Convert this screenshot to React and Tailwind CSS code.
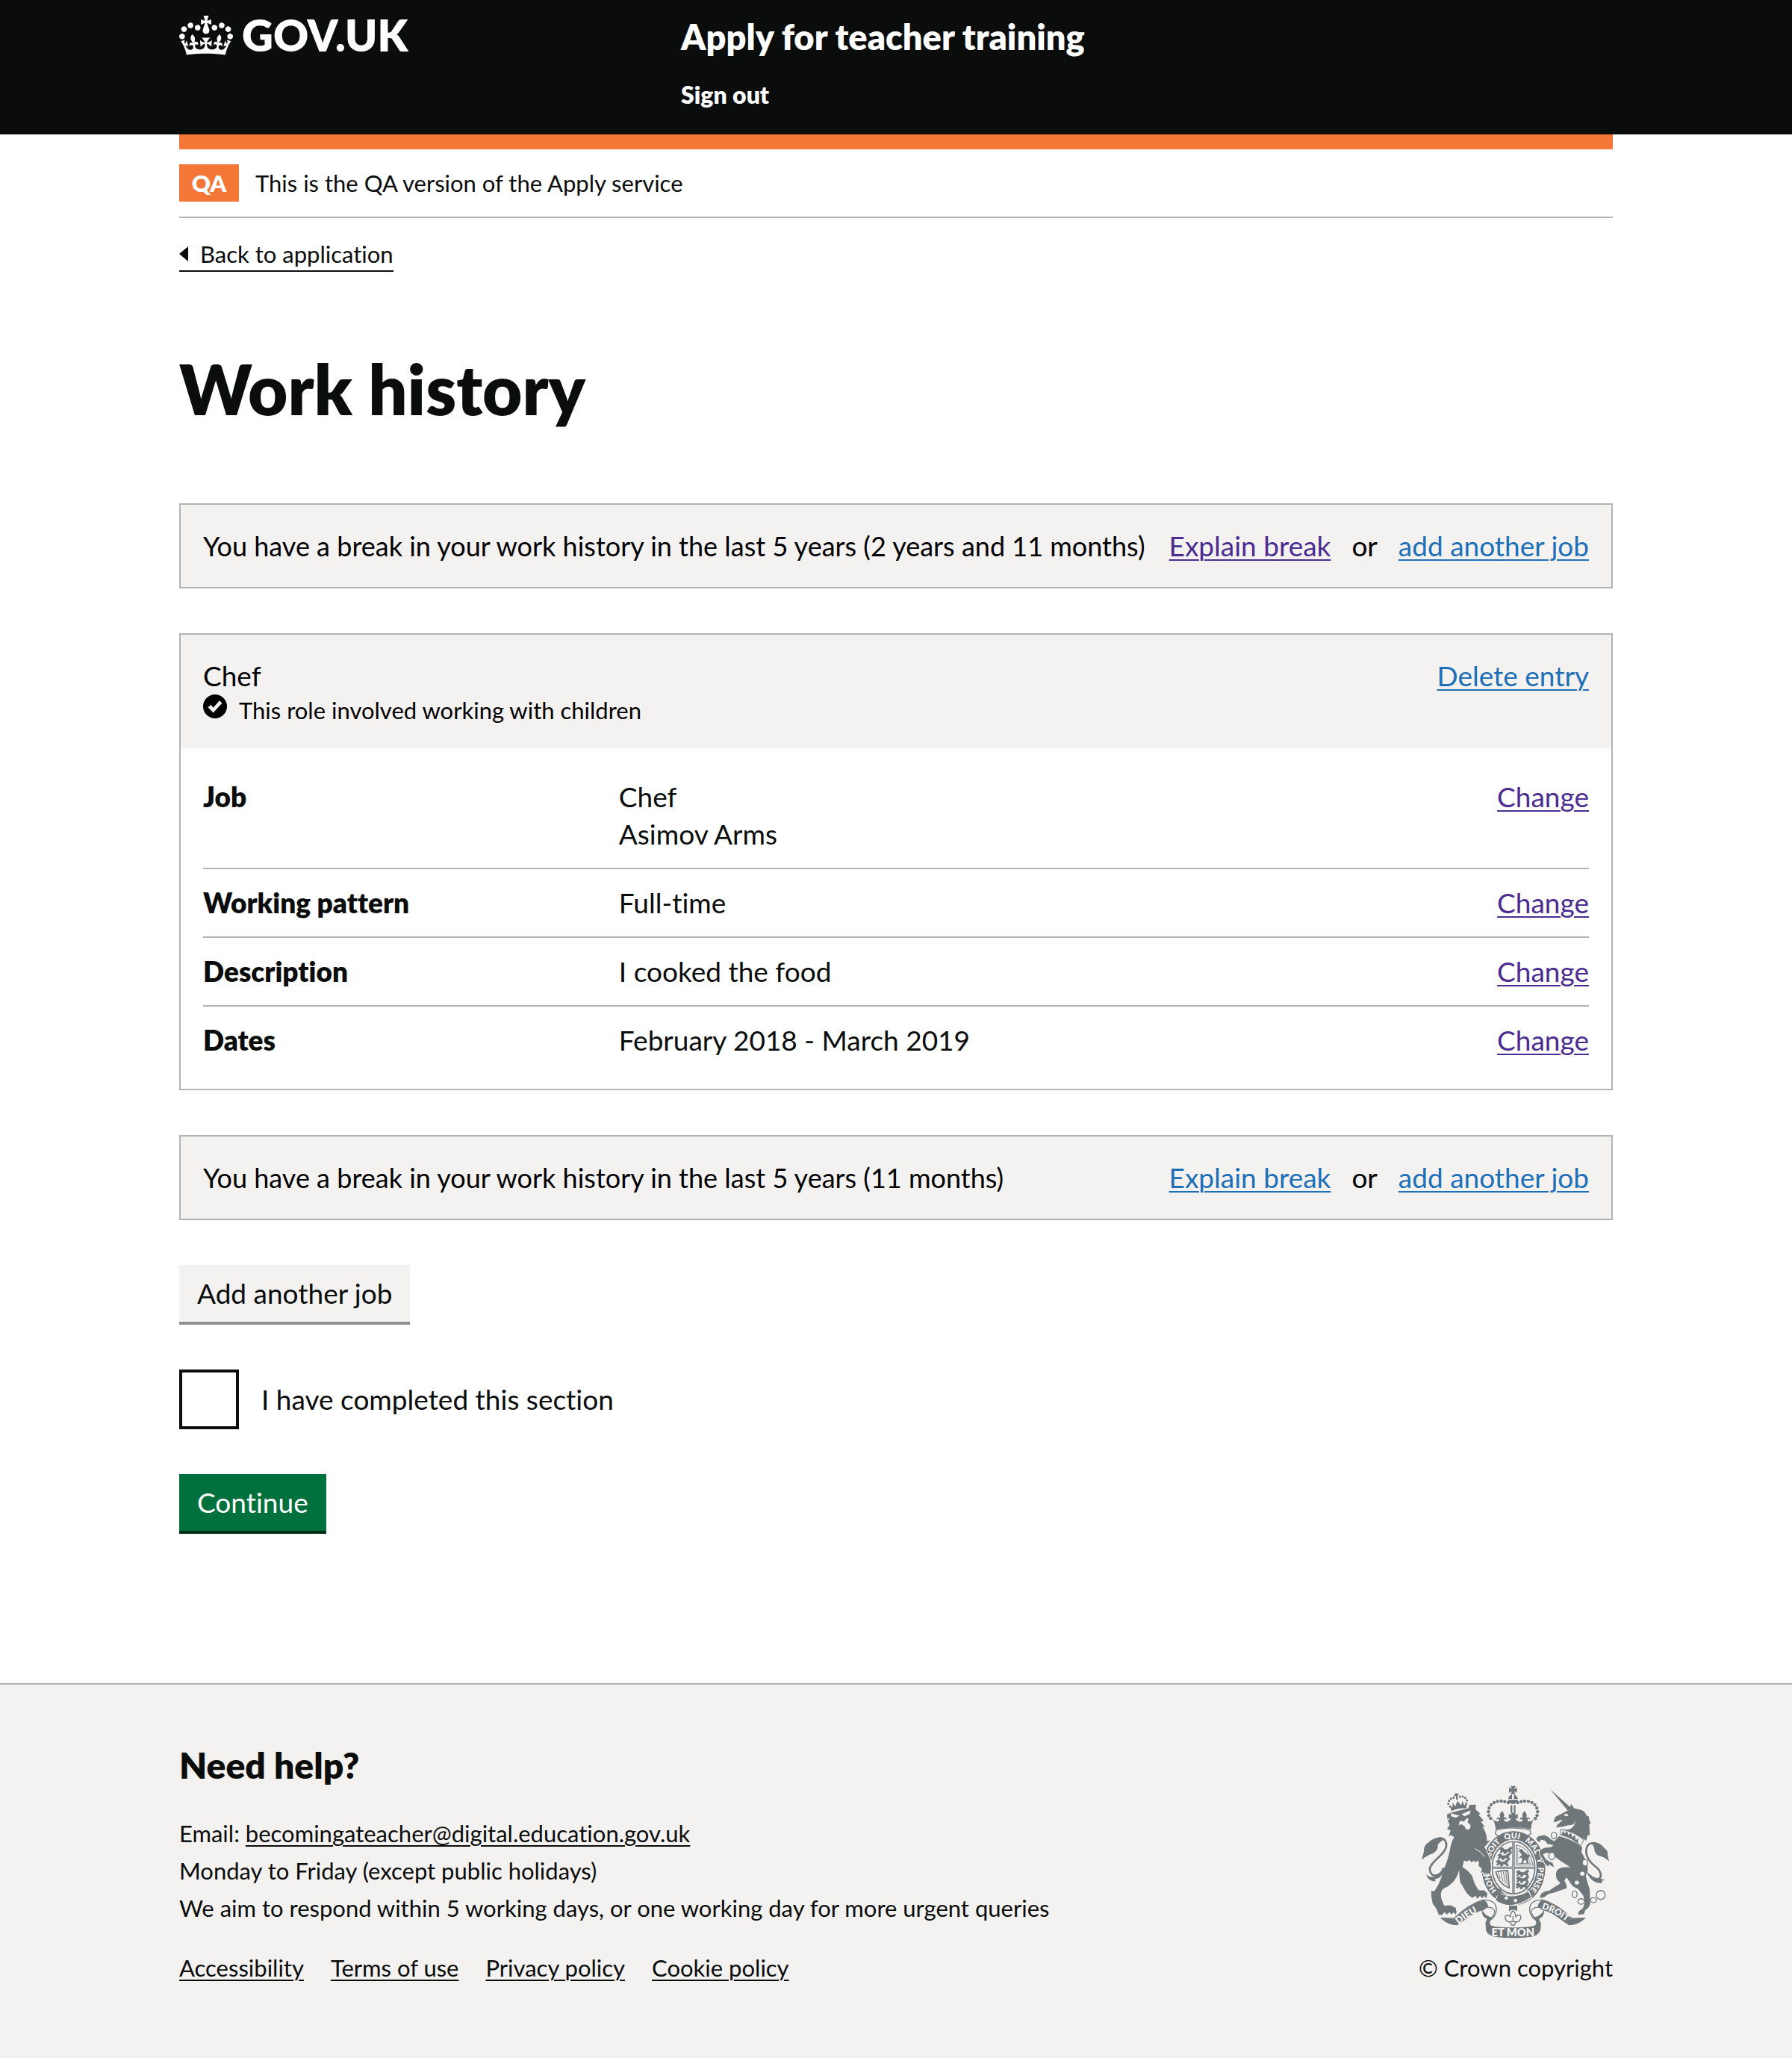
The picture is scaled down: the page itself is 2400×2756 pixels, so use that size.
const link =
  "underline decoration-2 underline-offset-[4px] hover:decoration-4 focus:bg-[#ffdd00] focus:text-[#0b0c0c] focus:outline-none";
const blue = "text-[#1d70b8]";
const visited = "text-[#4c2c92]";
const container = "mx-auto w-4/5 max-w-[1920px]";

const details = [
  { term: "Job", lines: ["Chef", "Asimov Arms"] },
  { term: "Working pattern", lines: ["Full-time"] },
  { term: "Description", lines: ["I cooked the food"] },
  { term: "Dates", lines: ["February 2018 - March 2019"] },
];

const footerLinks = ["Accessibility", "Terms of use", "Privacy policy", "Cookie policy"];

function Crown() {
  return (
    <svg viewBox="0 0 132 97" className="h-[53px] w-[72px]" fill="currentColor" aria-hidden="true">
      <path d="M25 30.2c3.5 1.5 7.7-.2 9.1-3.7 1.5-3.6-.2-7.8-3.9-9.2-3.6-1.4-7.6.3-9.1 3.9-1.4 3.5.3 7.5 3.9 9zM9 39.5c3.6 1.5 7.8-.2 9.2-3.7 1.5-3.6-.2-7.8-3.9-9.1-3.6-1.5-7.6.2-9.1 3.8-1.4 3.5.3 7.5 3.8 9zM4.4 57.2c3.5 1.5 7.7-.2 9.1-3.8 1.5-3.6-.2-7.7-3.9-9.1-3.5-1.5-7.6.3-9.1 3.8-1.4 3.5.3 7.6 3.9 9.1zm38.3-21.4c3.5 1.5 7.7-.2 9.1-3.8 1.5-3.6-.2-7.7-3.9-9.1-3.6-1.5-7.6.3-9.1 3.8-1.3 3.6.4 7.7 3.9 9.1zm64.4-5.6c-3.6 1.5-7.8-.2-9.1-3.7-1.5-3.6.2-7.8 3.8-9.2 3.6-1.4 7.7.3 9.2 3.9 1.3 3.5-.4 7.5-3.9 9zm15.9 9.3c-3.6 1.5-7.7-.2-9.1-3.7-1.5-3.6.2-7.8 3.7-9.1 3.6-1.5 7.7.2 9.2 3.8 1.5 3.5-.3 7.5-3.8 9zm4.7 17.7c-3.6 1.5-7.8-.2-9.2-3.8-1.5-3.6.2-7.7 3.9-9.1 3.6-1.5 7.7.3 9.2 3.8 1.3 3.5-.4 7.6-3.9 9.1zM89.3 35.8c-3.6 1.5-7.8-.2-9.2-3.8-1.4-3.6.2-7.7 3.9-9.1 3.6-1.5 7.7.3 9.2 3.8 1.4 3.6-.3 7.7-3.9 9.1zM69.7 17.7l8.9 4.7V9.3l-8.9 2.8c-.2-.3-.5-.6-.9-.9L72.4 0H59.6l3.5 11.2c-.3.3-.6.5-.9.9l-8.8-2.8v13.1l8.8-4.7c.3.3.6.7.9.9l-5 15.4v.1c-.2.8-.4 1.6-.4 2.4 0 4.1 3.1 7.5 7 8.1h.2c.3 0 .7.1 1 .1.4 0 .7 0 1-.1h.2c4-.6 7.1-4.1 7.1-8.1 0-.8-.1-1.7-.4-2.4V34l-5.1-15.4c.4-.2.7-.6 1-.9zM66 92.8c16.9 0 32.8 1.1 47.1 3.2 4-16.9 8.9-26.7 14-33.5l-9.6-3.4c1 4.9 1.1 7.2 0 10.2-1.5-1.4-3-4.3-4.2-8.7L108.6 76c2.8-2 5-3.2 7.5-3.3-4.4 9.4-10 11.9-13.6 11.2-4.3-.8-6.3-4.6-5.6-7.9 1-4.7 5.7-5.9 8-.5 4.3-8.7-3-11.4-7.6-8.8 7.1-7.2 7.9-13.5 2.1-21.1-8 6.1-8.1 12.3-4.5 20.8-4.7-5.4-12.1-2.5-9.5 6.2 3.4-5.2 7.9-2 7.2 3.1-.6 4.3-6.4 7.8-13.5 7.2-10.3-.9-10.9-8-11.2-13.8 2.5-.5 7.1 1.8 11 7.3L80.2 60c-4.1 4.4-8 5.3-12.3 5.4 1.4-4.4 8-11.6 8-11.6H55.5s6.4 7.2 7.9 11.6c-4.2-.1-8-1-12.3-5.4l1.4 16.4c3.9-5.5 8.5-7.7 10.9-7.3-.3 5.8-.9 12.8-11.1 13.8-7.2.6-12.9-2.9-13.5-7.2-.7-5 3.8-8.3 7.1-3.1 2.7-8.7-4.6-11.6-9.4-6.2 3.7-8.5 3.6-14.7-4.6-20.8-5.8 7.6-5 13.9 2.2 21.1-4.7-2.6-11.9.1-7.7 8.8 2.3-5.5 7.1-4.2 8.1.5.7 3.3-1.3 7.1-5.7 7.9-3.5.7-9-1.8-13.5-11.2 2.5.1 4.7 1.3 7.5 3.3l-4.7-15.4c-1.2 4.4-2.7 7.2-4.3 8.7-1.1-3-.9-5.3 0-10.2l-9.5 3.4c5 6.9 9.9 16.7 14 33.5 14.8-2.1 30.8-3.2 47.7-3.2z" />
    </svg>
  );
}

function CheckIcon() {
  return (
    <svg viewBox="0 0 32 32" className="size-8 shrink-0" aria-hidden="true">
      <circle cx="16" cy="16" r="16" fill="#000" />
      <path d="M6.5 17.2l4-3.4 3 4 8.5-9.6 3.5 3.2L13.7 24.6z" fill="#f3f2f1" />
    </svg>
  );
}

const beads = [
  [418, 133], [404, 129], [390, 127], [375, 128], [361, 133], [349, 142],
  [341, 155], [338, 170], [340, 185], [347, 197],
];

const lionBeads = [
  [181, 143], [176, 131], [181, 120], [190, 113], [201, 111],
  [227, 111], [238, 113], [247, 120], [252, 131], [247, 143],
];

const PassantLion = ({ x, y }) => (
  <path
    transform={`translate(${x} ${y})`}
    d="M-6 2l7-6 8 2 4 6 14-1 6-6 8-4 5 5-6 5-1 6 5 10-8 1-3-7-11 0-2 7-9 1 1-7-6-2-5 6-6-3 5-6z"
    strokeWidth="2"
  />
);

function CrestCrown() {
  return (
    <g>
      <path d="M427 66h21l-7 12 12-6v21l-12-6 6 12h-20l6-12-12 6V72l12 6z" />
      <path d="M418 118a20 20 0 0 1 15-17v17zM441 101a20 20 0 0 1 15 17h-15zM417 122h40q-1 14-20 17-19-3-20-17z" />
      {beads.map(([x, y]) => (
        <g key={x}>
          <circle cx={x} cy={y} r="6.5" />
          <circle cx={874 - x} cy={y} r="6.5" />
        </g>
      ))}
      <path d="M427 144h7v30h-7zM440 144h7v30h-7z" />
      <path d="M353 197q12 14 22 12 10-2 4-11-6-1-7 5-4-14 14-10-4-8-1-14 2-7 8-12 6 6 8 12 2 7-2 14 16-2 11 10-3-6-8-3-3 7 5 10 12 2 23-12-6-4-10 2v-22q6 4 12 4-1-4-5-8h22q-4 4-5 8 6 0 12-4v22q-4-6-10-2 11 14 23 12 8-3 5-10-5-3-8 3-5-12 11-10-4-7-2-14 2-6 8-12 6 5 8 12 3 6-1 14 18-4 14 10-1-6-7-5-6 9 4 11 10 2 22-12-14 21-13 44-70-16-143 0 0-23-14-44z" />
      <path d="M366 258q0-15 12-17 58-12 118 0 12 2 13 17-12 12-22 10-50-22-99 0-12 2-22-10z" fill="none" strokeWidth="4" />
    </g>
  );
}

function Shield() {
  return (
    <g>
      <ellipse cx="439" cy="397" rx="128" ry="149" />
      <ellipse cx="439" cy="395" rx="93" ry="113" fill="#f3f2f1" />
      <ellipse cx="439" cy="395" rx="86" ry="105" fill="none" strokeWidth="5" />
      <path d="M434 290h10v210h-10zM353 391h172v9H353z" />
      <path d="M439 290v210M353 395h172" stroke="#f3f2f1" strokeWidth="2" />
      <PassantLion x={389} y={318} />
      <PassantLion x={381} y={343} />
      <PassantLion x={375} y={368} />
      <PassantLion x={456} y={410} />
      <PassantLion x={456} y={435} />
      <PassantLion x={454} y={460} />
      <path d="M450 304q52 6 68 80h-68z" fill="none" strokeWidth="3" />
      <path d="M456 316q36 10 52 62h-52z" fill="none" strokeWidth="2" />
      <path d="M460 328l8-8 8 2 4 10 10 4 8 10 4-8 2 12-8 10 4 16-10 2 2-8-8-8-6 10 2 6-14 2 6-8 2-14-4-4-10 6 6-12 8-4z" />
      <path d="M368 412q24-6 48-6l6 70q-42-14-54-64z" fill="none" strokeWidth="5" />
      <path d="M378 414l8 26M388 413l9 38M398 411l9 48M408 410l6 56" strokeWidth="3" />
      <g fill="#f3f2f1" stroke="none" fontFamily="Lato, sans-serif" fontWeight="800" fontSize="32">
        <path
          id="garter-arc"
          d="M375 487A99 119 0 0 1 439 277A99 119 0 0 1 538 396A99 119 0 0 1 375 487"
          fill="none"
        />
        <text>
          <textPath href="#garter-arc" startOffset="2">HON</textPath>
        </text>
        <text>
          <textPath href="#garter-arc" startOffset="144">SOIT</textPath>
        </text>
        <text>
          <textPath href="#garter-arc" startOffset="236">QUI</textPath>
        </text>
        <text>
          <textPath href="#garter-arc" startOffset="318">MAL</textPath>
        </text>
        <text>
          <textPath href="#garter-arc" startOffset="404">Y</textPath>
        </text>
        <text>
          <textPath href="#garter-arc" startOffset="440">PENSE</textPath>
        </text>
      </g>
      <path d="M366 526q60 48 146-12l-12-26q-62 36-120 8z" stroke="#f3f2f1" strokeWidth="4" />
      <path d="M368 484q18-6 20 6-2 10-12 12 4 14-6 22M364 494q14 8 24 2" fill="none" strokeWidth="6" />
      <circle cx="410" cy="517" r="7" fill="#f3f2f1" />
      <circle cx="447" cy="527" r="7" fill="#f3f2f1" />
    </g>
  );
}

function Lion() {
  return (
    <g>
      <g transform="rotate(-10 214 130)">
        {lionBeads.map(([x, y]) => (
          <circle key={`${x}-${y}`} cx={x} cy={y} r="4.5" />
        ))}
        <path d="M210 94h9l-2 5 6-1v8l-6-1 1 16h-8l1-16-6 1v-8l6 1z" />
        <path d="M180 142l10 6 4-18 8 16 12-20 12 20 8-16 4 18 10-6-4 20q-30-8-60 0z" />
      </g>
      <path
        d="M172 180L192 172 258 156 262 142 288 141 286 160 306 178 298 182 320 207 308 208 324 232 314 230C328 250 332 270 332 288L346 284 322 312 336 340C346 360 350 380 348 402L344 424 338 418 332 424 328 414 320 424 318 412 308 416 312 400 298 386 300 372 292 366 288 376 280 366 270 374 262 364 252 370 240 366 234 392C256 408 272 420 276 438C282 462 292 476 300 486L322 486 334 500 330 518 320 508 314 518 304 508 294 520 286 508 274 516C250 506 236 470 228 460C220 444 222 420 220 404C214 432 196 462 160 478C146 486 144 504 150 524L160 548 186 546 206 556 210 574 206 584 198 574 190 584 182 574 170 584 162 574 150 586 138 584C130 560 124 552 114 540L108 510 108 488 120 490C134 470 150 440 154 410C170 380 178 350 186 310C190 290 196 280 200 272L188 264 178 268 186 246 172 238 182 222 174 206 184 196 172 198z"
        stroke="#f3f2f1"
        strokeWidth="6"
        paintOrder="stroke"
      />
      <path d="M186 176l36 10-16 8-18-6zM230 180l36-16-2 14-22 10z" fill="#f3f2f1" />
      <path d="M224 206l16 4 10-14 8 2-4 16q14 4 12 16-2 12-12 12-10-2-10-12l-14-10-12 4z" fill="#f3f2f1" />
      <path d="M284 318q26 12 40 34" fill="none" stroke="#f3f2f1" strokeWidth="3" />
      <path d="M158 395C146 432 106 438 102 404C101 370 166 344 169 306C168 272 142 270 118 286" fill="none" strokeWidth="8" />
      <path d="M150 272q-34 2-52 20-22 14-20 40l-8 30q26-20 44-24 24-14 20-36 10-14 22-18zM88 422q14 14 34 8 20-2 34-22-4 28-34 34l4 8q-32 0-38-28z" />
    </g>
  );
}

function Unicorn() {
  return (
    <g>
      <path d="M587 80l81 72-10 14z" />
      <path d="M600 210l8-20 28-14 24-12 12-26 10 18 26 6q18 4 24 22l12 6-2 8 8 18-6 4 2 46-8-4-6 24-50-30-40-14-8-12-22 4 2-14 14-6z" />
      <path d="M640 180l16-2 4 8-12 2zM608 212l20-10 8 4-14 8-10 12zM688 196q2 30-28 28l-30 8 2 8 24 2q34-6 32-46z" fill="#f3f2f1" />
      <path
        d="M622 268C660 276 700 296 716 314L712 332C726 356 740 384 738 404L730 428 736 452 746 484 748 540 740 556 728 566 722 582 698 584 702 570 718 558 726 536 720 508 700 482 678 470C664 452 658 440 652 434L644 446C648 458 656 466 652 478L600 496 582 500 562 514 544 518 550 500 566 490 582 488C600 474 618 466 628 456C612 444 606 430 612 410C618 396 640 390 668 394C636 372 606 356 596 340C580 332 566 334 558 342L568 360 582 370 596 376 602 392 590 388 584 380 580 390 566 380 560 366 546 344 544 326 562 316 592 312 600 304 592 302 576 300 566 286 550 282 544 292 536 288 530 278 540 268 564 264 580 272 590 282 604 288z"
        stroke="#f3f2f1"
        strokeWidth="6"
        paintOrder="stroke"
      />
      <path d="M630 240l-4 22q50 12 84 44l12-22q-34-32-92-44z" fill="#f3f2f1" strokeWidth="3" />
      <path d="M632 262l6-16 8 12 8-12 6 18 10-10 6 18 10-8 4 20 10-8-2 22q-30-26-66-36z" />
      <g fill="#f3f2f1" strokeWidth="4">
        <ellipse cx="602" cy="265" rx="11" ry="13" />
        <ellipse cx="593" cy="348" rx="12" ry="15" />
        <ellipse cx="727" cy="375" rx="11" ry="13" />
        <ellipse cx="716" cy="419" rx="11" ry="10" />
        <ellipse cx="694" cy="455" rx="11" ry="10" />
        <g fill="none">
          <ellipse cx="685" cy="502" rx="10" ry="14" />
          <ellipse cx="711" cy="531" rx="13" ry="11" />
          <ellipse cx="761" cy="526" rx="12" ry="10" />
          <circle cx="790" cy="505" r="18" />
        </g>
      </g>
      <path d="M744 424C786 466 806 424 776 396C748 376 726 348 733 316C740 294 756 294 774 302" fill="none" strokeWidth="8" />
      <path d="M752 292q34-2 52 24 16 10 14 28l6 26q-20-20-40-22-22-10-20-34zM732 404q16 28 40 32l36 8-14 4 2 10q-42 0-60-40z" />
    </g>
  );
}

function Motto() {
  return (
    <g>
      <path d="M146 598l54 1q60-58 116-74 56-2 54 42-2 22-24 40" fill="none" strokeWidth="4" />
      <path d="M728 598l-54 1q-60-58-116-74-56-2-54 42 2 22 24 40" fill="none" strokeWidth="4" />
      <path d="M146 598l56 2q60-60 116-75 14 4 20 24l-18 16q-20 4-42 16l-66 46q-36 0-66-29zM728 598l-56 2q-60-60-116-75-14 4-20 24l18 16q20 4 42 16l66 46q36 0 66-29z" />
      <path d="M316 566q10-16 34-10 24 12 4 36-22 20-10 36M558 566q-10-16-34-10-24 12-4 36 22 20 10 36" fill="none" strokeWidth="4" />
      <path d="M312 564q-2 28 20 36l-6 20q12 12 24 10-14-14 2-36-24-2-40-30zM562 564q2 28-20 36l6 20q-12 12-24 10 14-14-2-36 24-2 40-30z" />
      <path d="M326 614q10 14 40 18 71 8 142 0 30-4 42-18l-2 30q-8 26-42 30-69 8-138 0-36-6-40-30z" />
      <path d="M421 548h33v22l-11-6h-11l-11 6z" />
      <path d="M437 568q12 10 10 26 8-12 20-6 6 12-8 24l-12 2-4 12h-12l-4-12-12-2q-14-12-8-24 12-6 20 6-2-16 10-26z" fill="#f3f2f1" strokeWidth="4" />
      <path d="M423 612h28M437 590v22" fill="none" strokeWidth="4" />
      <g fill="#f3f2f1" fontFamily="Lato, sans-serif" fontWeight="800">
        <path id="motto-left" d="M218 623Q266 584 332 555" fill="none" />
        <path id="motto-right" d="M552 560Q612 576 668 624" fill="none" />
        <text fontSize="38">
          <textPath href="#motto-left">DIEU</textPath>
        </text>
        <text fontSize="36">
          <textPath href="#motto-right">DROIT</textPath>
        </text>
        <text x="437" y="670" fontSize="44" textAnchor="middle">
          ET MON
        </text>
      </g>
    </g>
  );
}

function Crest() {
  return (
    <svg viewBox="70 64 756 616" className="mr-1 h-[205px] w-[252px]" fill="#6f777b" aria-hidden="true">
      <g stroke="#6f777b" strokeWidth="0">
        <CrestCrown />
        <Shield />
        <Lion />
        <Unicorn />
        <Motto />
      </g>
    </svg>
  );
}

function BreakBanner({ length, seen }) {
  return (
    <section className="flex flex-wrap items-center justify-between border-2 border-[#b1b4b6] bg-[#f3f2f1] px-[30px] py-[30px] text-black">
      <p className="text-[36px]">You have a break in your work history in the last 5 years ({length})</p>
      <p className="flex gap-7">
        <a href="#explain" className={`${link} ${seen ? visited : blue}`}>
          Explain break
        </a>
        <span>or</span>
        <a href="#add" className={`${link} ${blue}`}>
          add another job
        </a>
      </p>
    </section>
  );
}

export default function App() {
  return (
    <div className="bg-white font-[Lato,sans-serif] text-[37px] leading-[50px] text-[#0b0c0c] [font-variant-ligatures:none]">
      <header className="bg-[#0b0c0c] text-white">
        <div className={`${container} flex items-start pb-7 pt-5`}>
          <div className="w-[35%]">
            <a href="#home" className="inline-flex items-center gap-3 text-[58px] font-extrabold leading-[54px]">
              <Crown />
              <span>GOV.UK</span>
            </a>
          </div>
          <div>
            <a href="#service" className="block text-[47px] font-extrabold leading-[58px]">
              Apply for teacher training
            </a>
            <nav className="mt-6 text-[32px] font-extrabold">
              <a href="#sign-out">Sign out</a>
            </nav>
          </div>
        </div>
      </header>

      <div className={container}>
        <div className="h-5 bg-[#f47738]" />
        <div className="flex items-center gap-[22px] border-b-2 border-[#b1b4b6] py-5 text-[31px]">
          <strong className="w-20 bg-[#f47738] text-center font-extrabold text-white">QA</strong>
          <span>This is the QA version of the Apply service</span>
        </div>

        <a href="#back" className="mt-7 inline-flex items-center gap-4 border-b-2 border-[#0b0c0c] pb-0.5 text-[31px] leading-[40px]">
          <svg viewBox="0 0 12 20" className="h-5 w-3" aria-hidden="true">
            <path d="M0 10L12 0v20z" fill="#0b0c0c" />
          </svg>
          Back to application
        </a>

        <main className="flex flex-col gap-[60px] pb-[200px] pt-[110px]">
          <h1 className="mb-[46px] text-[92px] font-extrabold leading-[94px]">Work history</h1>

          <BreakBanner length="2 years and 11 months" seen />

          <section className="border-2 border-[#b1b4b6]">
            <header className="flex items-start justify-between bg-[#f3f2f1] p-[30px] text-black">
              <div>
                <h2>Chef</h2>
                <p className="flex items-start gap-4 text-[31px] leading-[42px]">
                  <CheckIcon />
                  This role involved working with children
                </p>
              </div>
              <a href="#delete" className={`${link} ${blue}`}>
                Delete entry
              </a>
            </header>
            <dl className="px-[30px] py-5">
              {details.map(({ term, lines }) => (
                <div key={term} className="flex border-b-2 border-[#b1b4b6] py-5 last:border-b-0">
                  <dt className="w-[30%] font-extrabold">{term}</dt>
                  <dd className="flex-1">
                    {lines.map((line) => (
                      <p key={line}>{line}</p>
                    ))}
                  </dd>
                  <dd>
                    <a href="#change" className={`${link} ${visited}`}>
                      Change
                    </a>
                  </dd>
                </div>
              ))}
            </dl>
          </section>

          <BreakBanner length="11 months" />

          <div>
            <button type="button" className="block border-b-4 border-[#929191] bg-[#f3f2f1] px-6 py-[13px]">
              Add another job
            </button>
          </div>

          <div className="flex items-center gap-[30px]">
            <input
              id="completed"
              type="checkbox"
              className="size-20 shrink-0 appearance-none border-4 border-[#0b0c0c] bg-white checked:bg-[#0b0c0c]"
            />
            <label htmlFor="completed">I have completed this section</label>
          </div>

          <div>
            <button type="submit" className="block border-b-4 border-[#002d18] bg-[#00703c] px-6 py-[13px] text-white">
              Continue
            </button>
          </div>
        </main>
      </div>

      <footer className="border-t-2 border-[#b1b4b6] bg-[#f3f2f1] pb-24 pt-[78px] text-[31px]">
        <div className={`${container} flex items-end justify-between`}>
          <div>
            <h2 className="mb-9 text-[48px] font-extrabold leading-[60px]">Need help?</h2>
            <p>
              Email:{" "}
              <a href="mailto:becomingateacher@digital.education.gov.uk" className={link}>
                becomingateacher@digital.education.gov.uk
              </a>
            </p>
            <p>Monday to Friday (except public holidays)</p>
            <p>We aim to respond within 5 working days, or one working day for more urgent queries</p>
            <ul className="mt-[30px] flex gap-9">
              {footerLinks.map((label) => (
                <li key={label}>
                  <a href="#footer" className={link}>
                    {label}
                  </a>
                </li>
              ))}
            </ul>
          </div>
          <div className="flex flex-col items-end gap-3.5">
            <Crest />
            <a href="#copyright">© Crown copyright</a>
          </div>
        </div>
      </footer>
    </div>
  );
}
